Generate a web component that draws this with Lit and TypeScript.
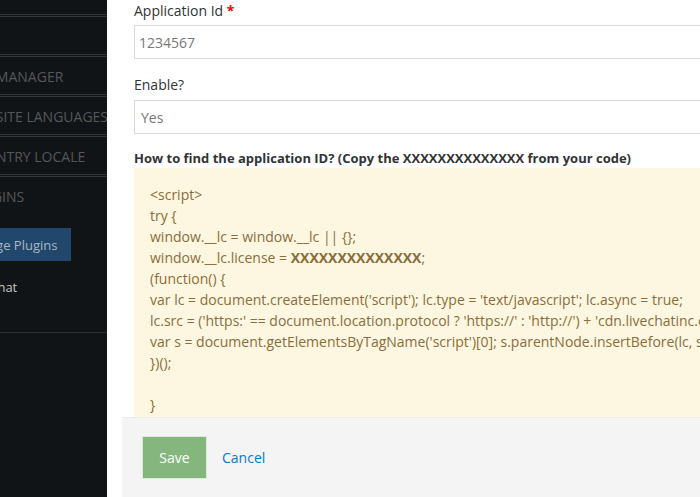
import { LitElement, html, css } from "lit";
import { customElement } from "lit/decorators.js";

@customElement("app-root")
export class AppRoot extends LitElement {
  static styles = css`
    :host { display: flex; width: 700px; height: 497px; overflow: hidden; background: #fff; font-family: "Open Sans", sans-serif; color: #333; }
    .side { flex: 0 0 107px; width: 107px; height: 497px; background: #111416; overflow: hidden; }
    .side-in { width: 260px; margin-left: -153px; padding-top: 14px; }
    .sec { height: 37px; border-top: 3px double #33363a; display: flex; align-items: center; padding-left: 119px; font-size: 14px; color: #54575a; white-space: nowrap; }
    .sec .lbl { position: relative; top: 1px; }
    .sub { height: 33px; width: 224px; padding-left: 115px; box-sizing: border-box; display: flex; align-items: center; font-size: 13px; }
    .active { background: #21476d; color: #a9b6c3; margin-top: 14px; }
    .plain { color: #c4c6c8; height: 30px; margin-top: 11px; }
    .rule { border-top: 1px solid #2c2f32; margin-top: 30px; }
    .main { flex: 1; min-width: 0; display: flex; flex-direction: column; height: 497px; }
    .form { flex: 0 0 417px; height: 417px; overflow: hidden; padding: 1px 0 0 27px; box-sizing: border-box; width: 593px; }
    .label { font-size: 14px; line-height: 20px; color: #333; white-space: nowrap; }
    .label.second { margin-top: 16px; }
    .first { margin-bottom: -1px; }
    .req { color: #f00; font-weight: 700; }
    .input { width: 600px; height: 34px; box-sizing: border-box; border: 1px solid #d9d9d9; margin-top: 5px; display: flex; align-items: center; padding-left: 4px; font-size: 14px; color: #777; }
    .input.sel { padding-left: 6px; }
    .h { font-size: 13px; line-height: 18px; font-weight: 700; margin-top: 15px; white-space: nowrap; }
    .code { width: 640px; height: 260px; margin-top: 1px; background: #fdf7e1; color: #8a6d3b; padding: 16px 0 0 16px; box-sizing: border-box; font-size: 14px; line-height: 21px; white-space: nowrap; }
    .code b { font-weight: 700; }
    .foot { flex: 1; margin-left: 15px; background: #f4f4f4; border-top: 1px solid #ececec; display: flex; align-items: center; padding: 0 0 1px 20px; gap: 15px; }
    .save { width: 65px; height: 43px; background: #85b67e; border: 1px solid #dfe8dc; box-sizing: border-box; color: #fff; font-size: 14px; font-family: inherit; padding: 0; }
    .cancel { color: #0a78c8; font-size: 14px; text-decoration: none; }
  `;
  render() {
    return html`
      <aside class="side">
        <div class="side-in">
          <div class="sec"></div>
          <div class="sec"><span class="lbl">FILE MANAGER</span></div>
          <div class="sec"><span class="lbl">WEBSITE LANGUAGES</span></div>
          <div class="sec"><span class="lbl">COUNTRY LOCALE</span></div>
          <div class="sec"><span class="lbl">PLUGINS</span></div>
          <div class="sub active">Manage Plugins</div>
          <div class="sub plain">Live Chat</div>
          <div class="rule"></div>
        </div>
      </aside>
      <main class="main">
        <div class="form">
          <div class="label first">Application Id <span class="req">*</span></div>
          <div class="input">1234567</div>
          <div class="label second">Enable?</div>
          <div class="input sel">Yes</div>
          <div class="h">How to find the application ID? (Copy the XXXXXXXXXXXXXX from your code)</div>
          <div class="code">
            &lt;script&gt;<br>
            try {<br>
            window.__lc = window.__lc || {};<br>
            window.__lc.license = <b>XXXXXXXXXXXXXX</b>;<br>
            (function() {<br>
            var lc = document.createElement('script'); lc.type = 'text/javascript'; lc.async = true;<br>
            lc.src = ('https:' == document.location.protocol ? 'https://' : 'http://') + 'cdn.livechatinc.com/tracking.js';<br>
            var s = document.getElementsByTagName('script')[0]; s.parentNode.insertBefore(lc, s);<br>
            })();<br>
            <br>
            }
          </div>
        </div>
        <div class="foot">
          <button class="save">Save</button>
          <a class="cancel" href="#">Cancel</a>
        </div>
      </main>
    `;
  }
}
